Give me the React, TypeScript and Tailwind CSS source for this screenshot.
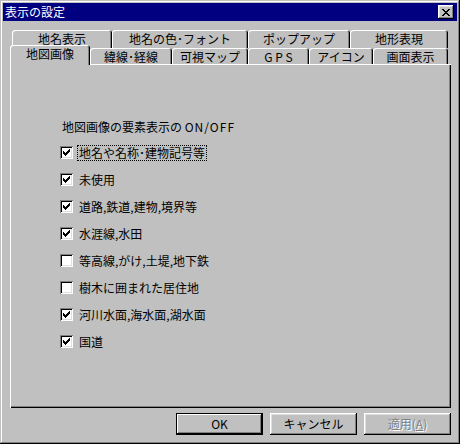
import type { ReactNode } from "react"

const font = "font-['Noto_Sans_CJK_JP','Noto_Sans',sans-serif]"

const backTabs = [
  { label: "地名表示", w: "w-[100px]" },
  { label: "地名の色･フォント", w: "w-[136px]" },
  { label: "ポップアップ", w: "w-[102px]" },
  { label: "地形表現", w: "w-[98px]" },
]

const frontTabs = [
  { label: "緯線･経線", w: "w-[82px]" },
  { label: "可視マップ", w: "w-[76px]" },
  { label: "G P S", w: "w-[61px]" },
  { label: "アイコン", w: "w-[64px]" },
  { label: "画面表示", w: "w-[75px]" },
]

const items = [
  { label: "地名や名称･建物記号等", on: true, focus: true },
  { label: "未使用", on: true },
  { label: "道路,鉄道,建物,境界等", on: true },
  { label: "水涯線,水田", on: true },
  { label: "等高線,がけ,土堤,地下鉄", on: false },
  { label: "樹木に囲まれた居住地", on: false },
  { label: "河川水面,海水面,湖水面", on: true },
  { label: "国道", on: true },
]

const CheckMark = () => (
  <svg width="7" height="7" viewBox="0 0 7 7" shapeRendering="crispEdges">
    <path
      d="M6 0h1v1h-1z M5 1h2v1h-2z M0 2h1v1h-1z M4 2h3v1h-3z M0 3h2v1h-2z M3 3h3v1h-3z M0 4h5v1h-5z M1 5h3v1h-3z M2 6h1v1h-1z"
      fill="#000"
    />
  </svg>
)

const CloseGlyph = () => (
  <svg width="8" height="7" viewBox="0 0 8 7" shapeRendering="crispEdges">
    <path
      d="M0 0h2v1h-2z M6 0h2v1h-2z M1 1h2v1h-2z M5 1h2v1h-2z M2 2h4v1h-4z M3 3h2v1h-2z M2 4h4v1h-4z M1 5h2v1h-2z M5 5h2v1h-2z M0 6h2v1h-2z M6 6h2v1h-2z"
      fill="#000"
    />
  </svg>
)

const Tab = ({ w, children, h }: { w: string; children: ReactNode; h: string }) => (
  <div
    className={`${w} ${h} shrink-0 bg-[#c0c0c0] rounded-t-[3px] shadow-[inset_1px_1px_#fff,inset_-1px_0_#000,inset_-2px_0_#808080] flex items-center justify-center text-[12px] leading-[14px] text-black`}
  >
    {children}
  </div>
)

const Button = ({
  children,
  isDefault,
  disabled,
}: {
  children: ReactNode
  isDefault?: boolean
  disabled?: boolean
}) => (
  <div
    className={`w-[87px] h-[22px] flex items-center justify-center text-[12px] leading-[14px] ${
      isDefault
        ? "border border-black shadow-[inset_-1px_-1px_#000,inset_1px_1px_#fff,inset_-2px_-2px_#808080]"
        : "shadow-[inset_-1px_-1px_#000,inset_1px_1px_#fff,inset_-2px_-2px_#808080,inset_2px_2px_#dfdfdf]"
    } ${
      disabled ? "text-[#808080] [text-shadow:1px_1px_0_#fff]" : "text-black"
    }`}
  >
    {children}
  </div>
)

export default function App() {
  return (
    <div
      className={`${font} w-[460px] h-[444px] bg-[#c0c0c0] p-[3px] flex flex-col shadow-[inset_-1px_-1px_#000,inset_1px_1px_#c0c0c0,inset_-2px_-2px_#808080,inset_2px_2px_#fff] overflow-hidden`}
    >
      {/* title bar */}
      <div className="h-[18px] bg-[#000080] flex items-center justify-between pl-[2px] pr-[3px]">
        <span className="text-white text-[12px] leading-[14px]">表示の設定</span>
        <div className="w-[16px] h-[14px] bg-[#c0c0c0] flex items-center justify-center shadow-[inset_-1px_-1px_#000,inset_1px_1px_#fff,inset_-2px_-2px_#808080,inset_2px_2px_#dfdfdf]">
          <CloseGlyph />
        </div>
      </div>

      {/* back tab row */}
      <div className="mt-[9px] ml-[9px] h-[18px] flex">
        {backTabs.map((t) => (
          <Tab key={t.label} w={t.w} h="h-[18px]">
            <span className="-mt-[1px]">{t.label}</span>
          </Tab>
        ))}
      </div>

      {/* front tab row */}
      <div className="ml-[7px] h-[16px] flex items-start">
        <div className="relative z-10 -mt-[3px] w-[80px] h-[20px] shrink-0 bg-[#c0c0c0] rounded-t-[3px] shadow-[inset_1px_1px_#fff,inset_-1px_0_#000,inset_-2px_0_#808080] flex items-center justify-center text-[12px] leading-[14px] text-black">
          <span className="-mt-[2px]">地図画像</span>
        </div>
        {frontTabs.map((t) => (
          <Tab key={t.label} w={t.w} h="h-[16px]">
            <span className="mt-[1px] whitespace-pre">{t.label}</span>
          </Tab>
        ))}
      </div>

      {/* panel */}
      <div className="ml-[7px] w-[441px] h-[344px] shrink-0 shadow-[inset_1px_1px_#fff,inset_-1px_-1px_#000,inset_-2px_-2px_#808080] pt-[55px] pl-[50px] text-[12px] text-black">
        <div className="h-[16px] leading-[16px] pl-[2px]">
          地図画像の要素表示の <span className="tracking-[1px]">ON/OFF</span>
        </div>
        <div className="mt-[4px] flex flex-col">
          {items.map((it) => (
            <div key={it.label} className="h-[27px] flex items-center">
              <span className="w-[13px] h-[13px] shrink-0 bg-white flex items-center justify-center shadow-[inset_1px_1px_#808080,inset_-1px_-1px_#fff,inset_2px_2px_#000,inset_-2px_-2px_#dfdfdf]">
                {it.on && <CheckMark />}
              </span>
              <span
                className={`ml-[4px] px-[1px] h-[16px] leading-[14px] border ${
                  it.focus ? "border-dotted border-black" : "border-transparent"
                }`}
              >
                {it.label}
              </span>
            </div>
          ))}
        </div>
      </div>

      {/* buttons */}
      <div className="mt-[5px] flex justify-end gap-[7px] pr-[6px]">
        <Button isDefault>OK</Button>
        <Button>キャンセル</Button>
        <Button disabled>
          適用(<span className="underline">A</span>)
        </Button>
      </div>
    </div>
  )
}
